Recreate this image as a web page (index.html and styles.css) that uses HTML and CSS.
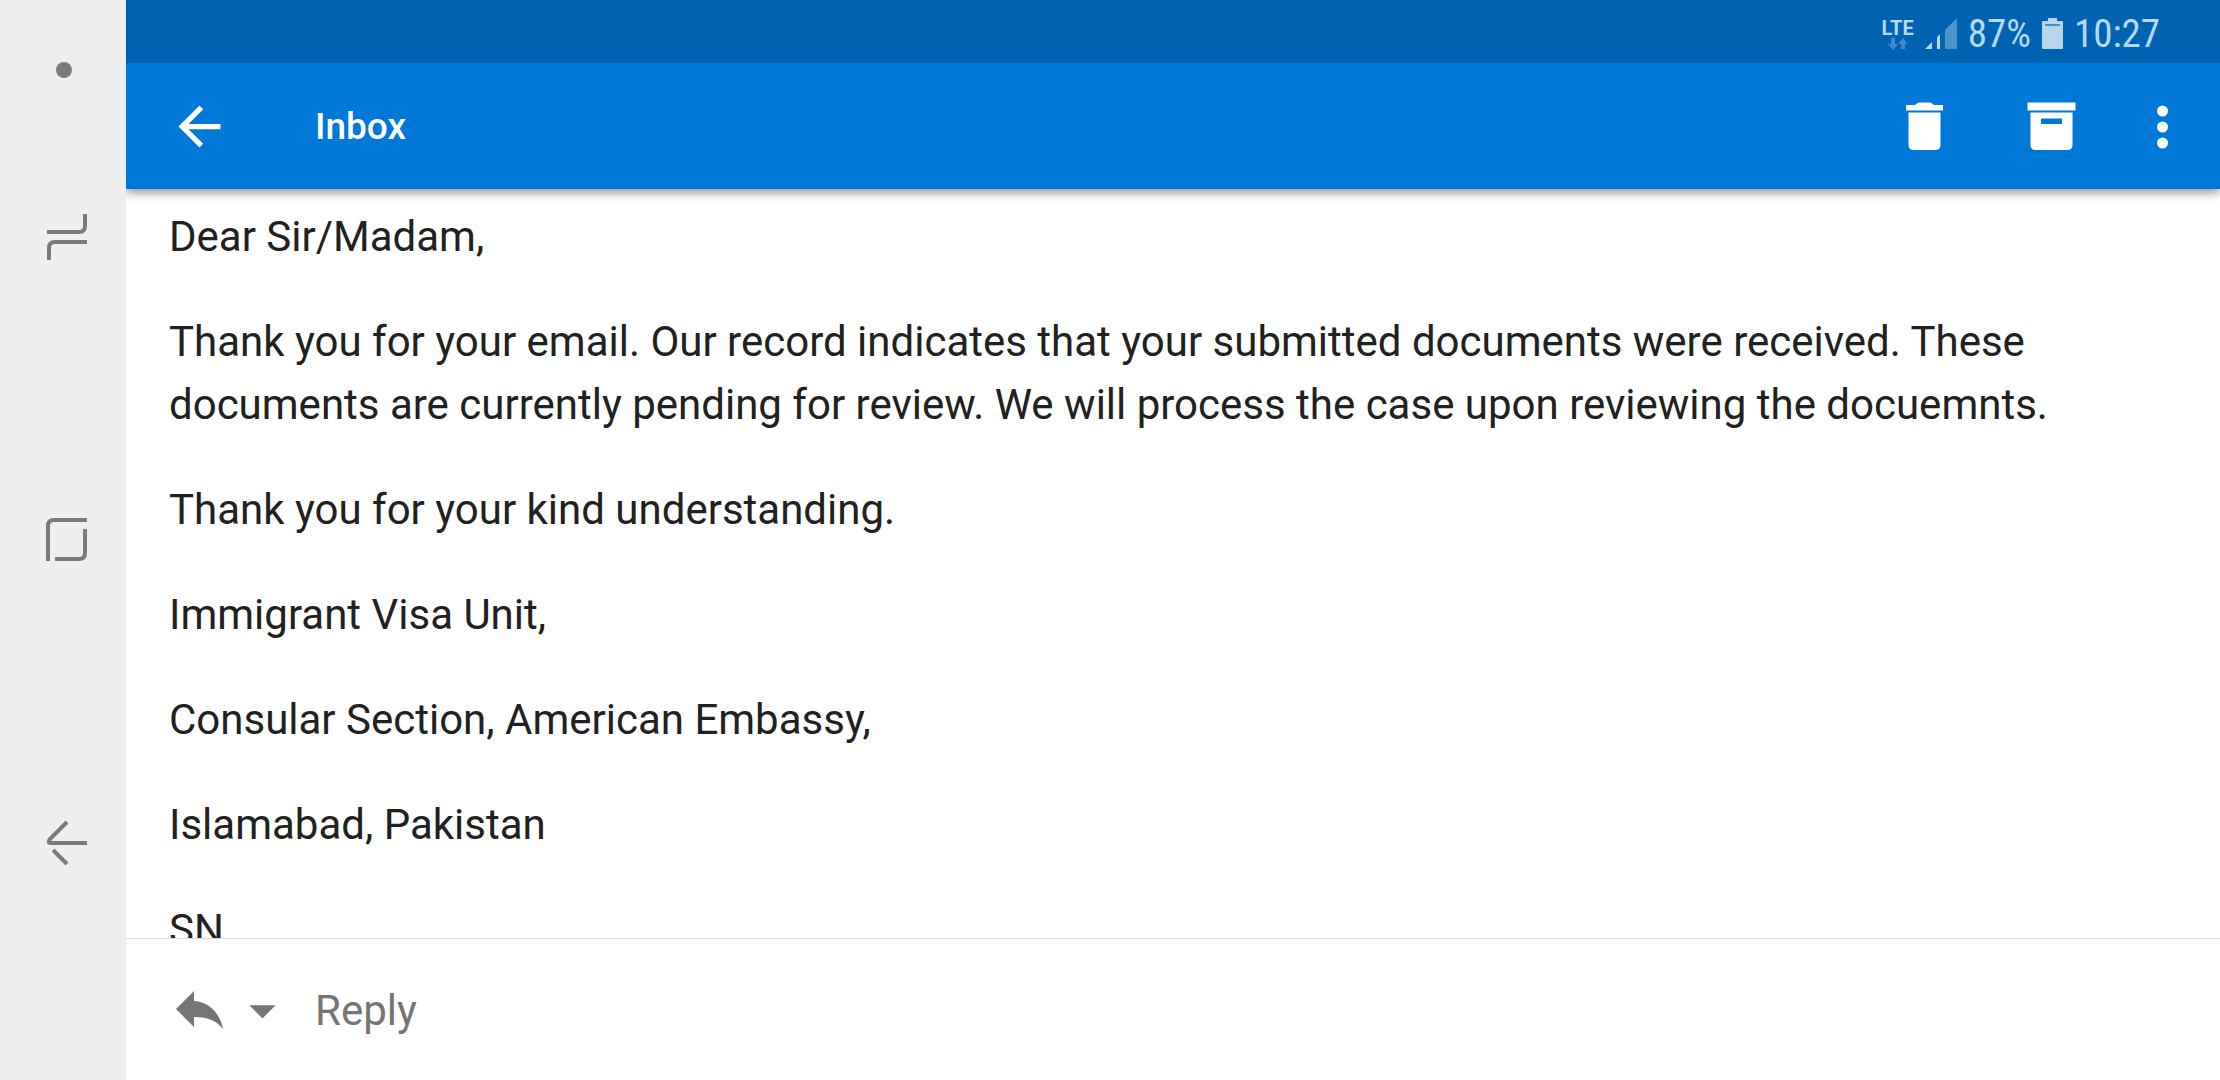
FILE: index.html
```html
<!DOCTYPE html>
<html lang="en">

<head>
    <meta charset="UTF-8">
    <meta name="viewport" content="width=device-width, initial-scale=1.0">
    <title>Inbox</title>
    <link rel="stylesheet" href="styles.css">
</head>

<body>
    <nav class="navbar">
        <button class="dot" aria-label="Hide navigation bar"></button>
        <button aria-label="Recent apps">
            <svg viewBox="0 0 50 50">
                <path d="M5 20H37Q43 20 43 14V2M7 48V36Q7 30 13 30H45" />
            </svg>
        </button>
        <button aria-label="Home">
            <svg viewBox="0 0 50 50">
                <path d="M6 46V11Q6 5 12 5H45M43 14V38Q43 44 37 44H13" />
            </svg>
        </button>
        <button aria-label="Back">
            <svg viewBox="0 0 50 50">
                <path d="M25 4L8 21Q5 25 9 25H45M11 32L25 46" />
            </svg>
        </button>
    </nav>
    <div class="screen">
        <div class="status">
            <div class="network">
                <span>LTE</span>
                <svg viewBox="0 0 20 12">
                    <path d="M3 0h4v6h3l-5 6-5-6h3zM13 11h4V6h3l-5-6-5 6h3z" />
                </svg>
            </div>
            <svg class="signal" viewBox="0 0 32 32">
                <path d="M0 31L7 24V31zM12 31V19L15 16V31z" />
                <path class="weak" d="M20 31V12L32 0V31z" />
            </svg>
            <span>87%</span>
            <svg class="battery" viewBox="0 0 21 32">
                <path d="M6 0h9v3h5q1 0 1 1v26q0 1-1 1H1q-1 0-1-1V4q0-1 1-1h5z" />
                <path class="level" d="M3 7H18" />
            </svg>
            <span>10:27</span>
        </div>
        <header class="appbar">
            <button aria-label="Navigate up">
                <svg viewBox="0 0 24 24">
                    <path d="M20 11H7.830l5.590-5.590L12 4l-8 8 8 8 1.410-1.410L7.830 13H20v-2z" />
                </svg>
            </button>
            <h1>Inbox</h1>
            <button class="action" aria-label="Delete">
                <svg viewBox="0 0 63 63">
                    <path d="M12 10H21Q23 7.500 25 7.500H36Q38 7.500 40 10H49V15.500H12zM14.500 17.500H46.500V50Q46.500 55 41.500 55H19.500Q14.500 55 14.500 50z" />
                </svg>
            </button>
            <button class="action" aria-label="Archive">
                <svg viewBox="0 0 63 63">
                    <path fill-rule="evenodd" d="M7.500 7.500H55.500V15.500H7.500zM10.500 17.500H52.500V50Q52.500 55 47.500 55H15.500Q10.500 55 10.500 50zM21 23.500V29H42V23.500z" />
                </svg>
            </button>
            <button class="more" aria-label="More options">
                <svg viewBox="0 0 63 63">
                    <circle cx="31.500" cy="16" r="5.500" />
                    <circle cx="31.500" cy="32" r="5.500" />
                    <circle cx="31.500" cy="48" r="5.500" />
                </svg>
            </button>
        </header>
        <main class="message">
            <p>Dear Sir/Madam,</p>
            <p>Thank you for your email. Our record indicates that your submitted documents were received. These documents are currently pending for review. We will process the case upon reviewing the docuemnts.</p>
            <p>Thank you for your kind understanding.</p>
            <p>Immigrant Visa Unit,</p>
            <p>Consular Section, American Embassy,</p>
            <p>Islamabad, Pakistan</p>
            <p>SN</p>
        </main>
        <footer class="replybar">
            <button aria-label="Reply to sender">
                <svg viewBox="0 0 63 63">
                    <path d="M8 30L26 12V22C41 23 52 34 55 50C48 41 39 38 26 38V48z" />
                </svg>
            </button>
            <button aria-label="Reply options">
                <svg viewBox="0 0 24 24">
                    <path d="M7 10l5 5 5-5z" />
                </svg>
            </button>
            <button class="reply">Reply</button>
        </footer>
    </div>
</body>

</html>
```
FILE: styles.css
```css
* {
    margin: 0;
    padding: 0;
    box-sizing: border-box;
}

html,
body {
    height: 100%;
}

body {
    display: flex;
    overflow: hidden;
    font-family: Roboto, "Liberation Sans", sans-serif;
    font-size: 42px;
    color: #212121;
    background-color: #fff;
}

button {
    appearance: none;
    border: none;
    outline: none;
    background: none;
    font: inherit;
    color: inherit;
    display: flex;
    align-items: center;
    justify-content: center;
}

svg {
    display: block;
    fill: currentColor;
}

/* system navigation */
.navbar {
    flex: none;
    width: 126px;
    padding: 54px 0 86px 8px;
    display: flex;
    flex-direction: column;
    background-color: #efefef;
    color: #7b7b7b;
}

.navbar button {
    flex: 1;
}

.navbar .dot {
    flex: none;
    height: 32px;
    padding-right: 6px;
}

.dot::before {
    content: "";
    width: 16px;
    height: 16px;
    border-radius: 50%;
    background-color: #7b7b7b;
}

.navbar svg {
    width: 50px;
    height: 50px;
    fill: none;
    stroke: currentColor;
    stroke-width: 4;
}

.screen {
    flex: 1;
    min-width: 0;
    display: flex;
    flex-direction: column;
    overflow: hidden;
}

/* status bar */
.status {
    flex: none;
    height: 63px;
    padding: 5px 60px 0 0;
    display: flex;
    align-items: center;
    justify-content: flex-end;
    gap: 11px;
    font-family: "Roboto Condensed", Roboto, sans-serif;
    font-size: 39px;
    color: #b3d9f7;
    background-color: #0063b1;
    position: relative;
    z-index: 2;
}

.network {
    display: flex;
    flex-direction: column;
    align-items: center;
    font-family: Roboto, "Liberation Sans", sans-serif;
    font-size: 20px;
    font-weight: 700;
    line-height: 20px;
}

.network svg {
    width: 20px;
    height: 12px;
    color: #3d8bcb;
}

.signal {
    width: 32px;
    height: 32px;
}

.weak {
    fill: #4c94cc;
}

.battery {
    width: 21px;
    height: 32px;
    color: #b9d5eb;
}

.level {
    stroke: #4c8cc0;
    stroke-width: 2;
}

/* app bar */
.appbar {
    flex: none;
    height: 126px;
    padding: 0 10px 0 42px;
    display: flex;
    align-items: center;
    color: #fff;
    background-color: #0078d7;
    box-shadow: 0 4px 9px rgba(0, 0, 0, 0.4);
    position: relative;
    z-index: 1;
}

.appbar svg,
.replybar svg {
    width: 63px;
    height: 63px;
}

.appbar h1 {
    flex: 1;
    padding-left: 84px;
    font-size: 37px;
    font-weight: 500;
}

.appbar .action {
    width: 126px;
    height: 126px;
}

.appbar .more {
    width: 96px;
    height: 126px;
}

/* message */
.message {
    flex: 1;
    min-height: 0;
    padding: 16px 43px 0;
    overflow: hidden;
    line-height: 63px;
}

.message p {
    margin-bottom: 42px;
}

.replybar {
    flex: none;
    height: 142px;
    padding: 2px 42px 0;
    display: flex;
    align-items: center;
    border-top: 1px solid #dcdcdc;
    color: #757575;
}

.reply {
    padding-left: 21px;
}
```
